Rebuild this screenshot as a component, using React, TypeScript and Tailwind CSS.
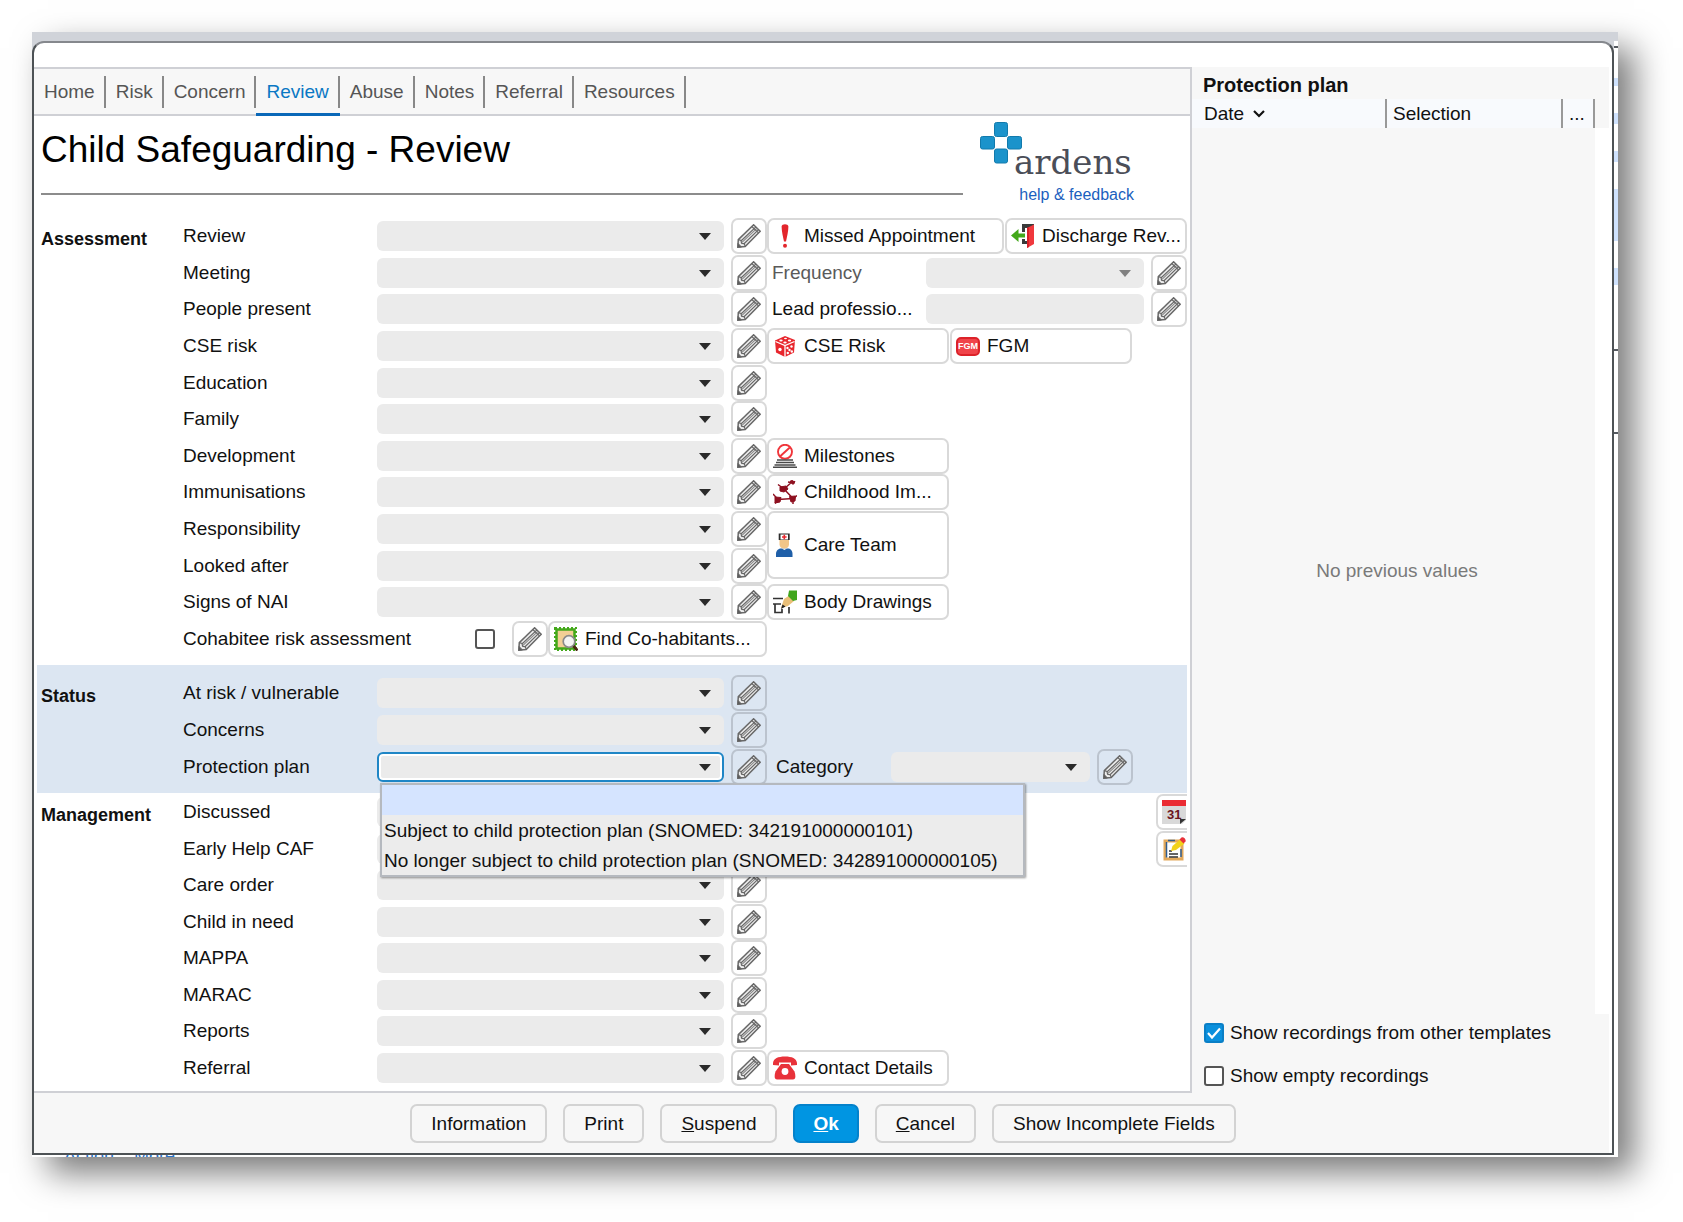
import type { ReactNode } from "react";
import clsx from "clsx";

const tabs = ["Home", "Risk", "Concern", "Review", "Abuse", "Notes", "Referral", "Resources"];

const options = [
  "",
  "Subject to child protection plan (SNOMED: 342191000000101)",
  "No longer subject to child protection plan (SNOMED: 342891000000105)",
];

// slices of the application visible behind the dialog
const backdrop = [
  { height: "h-[5px]", color: "bg-white" },
  { height: "h-[2px]", color: "bg-[#555a60]" },
  { height: "h-[30px]", color: "bg-white" },
  { height: "h-[8px]", color: "bg-[#cfe2fd]" },
  { height: "h-[27px]", color: "bg-white" },
  { height: "h-[11px]", color: "bg-[#cfe2fd]" },
  { height: "h-[27px]", color: "bg-white" },
  { height: "h-[11px]", color: "bg-[#cfe2fd]" },
  { height: "h-[27px]", color: "bg-white" },
  { height: "h-[52px]", color: "bg-[#cfe2fd]" },
  { height: "h-[27px]", color: "bg-white" },
  { height: "h-[17px]", color: "bg-[#cfe2fd]" },
  { height: "h-[64px]", color: "bg-white" },
  { height: "h-[2px]", color: "bg-[#555a60]" },
  { height: "h-[81px]", color: "bg-white" },
  { height: "h-[2px]", color: "bg-[#555a60]" },
];

function PencilIcon() {
  return (
    <svg viewBox="0 0 24 24" className="h-6 w-6" fill="none" stroke="#686868">
      <path d="M.8 23.2 1.3 15.6 16.6.8l6.6 6.4L8.2 22.6z" fill="#ececec" strokeWidth="1.5" />
      <path d="M1.3 15.6 4 16.4l.6 2.8 2.8.7.8 2.7M4.2 16.8 19 2.9M7 19.7 21.6 5.6" strokeWidth="1.2" />
      <path d="M5.2 18.2 20.2 4.2" stroke="#8a8a8a" strokeWidth="1.1" />
      <path d="M.8 23.2 1 19.4l3.4 3.5z" fill="#555" />
      <path d="m14.8 2.5 6.7 6.4" strokeWidth="1.2" />
    </svg>
  );
}

function AlertIcon() {
  return (
    <svg viewBox="0 0 24 24" className="h-6 w-6" fill="#e3262c">
      <path d="M8.6 2.6C8.8-.5 15.2-.5 15.4 2.6 15.4 7 14 13 13 17.5h-2C10 13 8.6 7 8.6 2.6z" />
      <circle cx="12" cy="21.8" r="2" />
    </svg>
  );
}

function DoorIcon() {
  return (
    <svg viewBox="0 0 24 24" className="h-6 w-6">
      <path d="M11 0h12v4H14v4h-3zM11 15h3v2h2v3h-5z" fill="#3a3a3a" />
      <path d="m16 4 7-3.5V20l-7 4z" fill="#f0383d" />
      <path d="m16 4 2-1v20l-2 1z" fill="#d81f27" />
      <path d="M0 11.5 7.5 5v4.5H14v4H7.5V18z" fill="#43a81a" />
    </svg>
  );
}

function DiceIcon() {
  return (
    <svg viewBox="0 0 24 24" className="h-6 w-6">
      <path d="m12 2 10 4-1 12.5-9 4.5-9-4.5L2 6.5z" fill="#e8262d" />
      <path d="m2.5 7.5 9.5 4 9.5-4M12 11.5V23" stroke="#fff" strokeWidth="1.3" fill="none" />
      <g fill="#fff">
        <ellipse cx="8" cy="6.5" rx="1.7" ry="1" />
        <ellipse cx="12.5" cy="4.5" rx="1.5" ry=".8" />
        <ellipse cx="12" cy="8.5" rx="1.7" ry="1" />
        <ellipse cx="16.5" cy="6.5" rx="1.7" ry="1" />
        <circle cx="7" cy="15.5" r="1.7" />
        <circle cx="14.5" cy="14" r="1.2" />
        <circle cx="18.5" cy="12.5" r="1.2" />
        <circle cx="16.5" cy="16" r="1.2" />
        <circle cx="14.8" cy="19" r="1.2" />
        <circle cx="18.8" cy="17.5" r="1.2" />
      </g>
    </svg>
  );
}

function FgmIcon() {
  return (
    <span className="grid h-[19px] w-6 place-items-center rounded-[5px] border-2 border-[#dc2229] bg-[#f0444a] text-[9px] leading-none font-bold text-white">
      FGM
    </span>
  );
}

function MilestonesIcon() {
  return (
    <svg viewBox="0 0 24 24" className="h-6 w-6" fill="none">
      <circle cx="12" cy="7.8" r="7" stroke="#f0353a" strokeWidth="1.9" />
      <path d="M7.2 12.2 16.8 3.5" stroke="#f0353a" strokeWidth="1.9" />
      <path d="M4 16h16M3 18.5h18M1.5 21h21M0 23.3h24" stroke="#4a4a4a" strokeWidth="1.4" />
    </svg>
  );
}

function VirusIcon() {
  return (
    <svg viewBox="0 0 24 24" className="h-6 w-6" fill="#8e1020" stroke="#8e1020">
      <path
        d="m11 9 9-8M11 9 5 4.5M11 9l9 9.5M20 18.5 5 19.5M0 14l5 5.5-3 4M15 2l6 1M18.5 0l3 3.5M20 18.5V24M20 18.5l4-3"
        strokeWidth="1.5"
        fill="none"
      />
      <path d="m7 7 6-1 2 3-4 3-4-1z" />
      <path d="m2 17 6 .5-1 4.5-5 1zM16.5 16.5l6-.5-.5 5-4 1z" />
      <path d="m17 1 5 .5-2 3z" />
    </svg>
  );
}

function NurseIcon() {
  return (
    <svg viewBox="0 0 24 24" className="h-6 w-6">
      <path d="M3 24v-3c0-4 3-5.500 5-5.500h6.500c3 0 5 2 5 5.500v3z" fill="#1f5fa8" />
      <path d="m9 15.5 2.300 1.500 2.700-1.500z" fill="#fff" />
      <path d="M6.500 7h9.500v4.500c0 2.500-2 4-4.700 4S6.500 14 6.500 11.500z" fill="#f1c588" />
      <path d="M5.700.5h11V7h-11z" fill="#2b2b2b" />
      <path d="M7.500 1.500h7.500V6.500H7.500z" fill="#fff" />
      <path d="M11.300 1.800v4.400M9 4h4.600" stroke="#e8262d" strokeWidth="1.6" />
    </svg>
  );
}

function DrawingIcon() {
  return (
    <svg viewBox="0 0 24 24" className="h-6 w-6" fill="none" stroke="#333">
      <path d="M0 8.5h10M0 14h8M2 14v8.5h7V19M16 17v6.5" strokeWidth="1.7" />
      <path d="m8 18 3-9 6-4 4 6-6 5z" fill="#e9bf78" stroke="none" />
      <path d="M16 .5h8V10l-4 1-5-5z" fill="#3fa51c" stroke="none" />
      <path d="m8 19 1.5-4.5 3 2z" fill="#222" stroke="none" />
    </svg>
  );
}

function StampIcon() {
  return (
    <svg viewBox="0 0 24 24" className="h-6 w-6" fill="none">
      <path d="M2.5 2.5h18v19h-18z" fill="#f2cf95" stroke="#43a81a" strokeWidth="2.5" />
      <path d="M1 1h21v22H1z" stroke="#43a81a" strokeWidth="2" strokeDasharray="2 2" />
      <circle cx="15" cy="14.5" r="5.8" fill="#f4f4f4" stroke="#8a8a8a" strokeWidth="1.7" />
      <path d="m19.5 19 4 4.5" stroke="#4a2512" strokeWidth="2.8" />
    </svg>
  );
}

function PhoneIcon() {
  return (
    <svg viewBox="0 0 24 24" className="h-6 w-6" fill="#e8323a">
      <path d="M0 7C.5 2.5 5 .5 12 .5S23.5 2.5 24 7v2l-6 .5V6.5H6v3L0 9z" />
      <path d="M8 8h8l5.5 7.5c1.5 5 1 8-1.5 8H4c-2.5 0-3-3-1.5-8z" />
      <circle cx="12" cy="15.5" r="3.4" fill="#fff" />
    </svg>
  );
}

function CalendarIcon() {
  return (
    <svg viewBox="0 0 24 24" className="h-6 w-6">
      <path d="M0 0h24v20l-4 4H0z" fill="#d9d9d9" />
      <path d="M0 0h24v6H0z" fill="#ea2c33" />
      <path d="M18 24v-5h6z" fill="#333" />
      <text x="5" y="19" fontSize="13" fontWeight="bold" fill="#6b1520" fontFamily="Liberation Sans, sans-serif">
        31
      </text>
    </svg>
  );
}

function ClipboardIcon() {
  return (
    <svg viewBox="0 0 24 24" className="h-6 w-6" fill="none">
      <path d="M3 4h17v18H3z" fill="#fff" stroke="#e3a95c" strokeWidth="3" />
      <path d="M4.5 20.5V5M19 20V12M6 3.5h7" stroke="#2f5c8f" strokeWidth="1.5" />
      <path d="M7 14h3M7 17h9M7 20h9" stroke="#333" strokeWidth="1.5" />
      <path d="m9 14 1.5-5 8-7 4 4.5L14 13z" fill="#f2d21b" />
      <path d="m17.5 2.5 2-2c2-1 5 2 4 4l-2 2z" fill="#e8323a" />
    </svg>
  );
}

function EditButton({ label }: { label: string }) {
  return (
    <button
      aria-label={`Edit ${label}`}
      className="grid h-9 w-9 shrink-0 place-items-center rounded-[7px] border-2 border-black/15"
    >
      <PencilIcon />
    </button>
  );
}

function LinkButton({
  icon,
  className,
  children,
}: {
  icon: ReactNode;
  className?: string;
  children: ReactNode;
}) {
  return (
    <button
      className={clsx(
        "flex shrink-0 items-center gap-[7px] rounded-[7px] border-2 border-black/15 bg-white pl-1 whitespace-nowrap",
        className ?? "h-9 w-[182px]",
      )}
    >
      {icon}
      {children}
    </button>
  );
}

function SelectBox({ id, disabled, focused }: { id: string; disabled?: boolean; focused?: boolean }) {
  return (
    <div className="relative flex min-w-0 flex-1">
      <select
        id={id}
        disabled={disabled}
        className={clsx(
          "h-[30px] w-full appearance-none rounded-[6px] bg-[#ebebeb] px-2 outline-none",
          focused && "border-2 border-[#1f86c6] ring-2 ring-white ring-inset",
        )}
      >
        <option />
      </select>
      <svg
        viewBox="0 0 12 7"
        className={clsx(
          "pointer-events-none absolute top-3 right-[13px] h-[7px] w-3",
          disabled ? "fill-[#808080]" : "fill-[#2a2a2a]",
        )}
      >
        <path d="M0 0h12L6 7z" />
      </svg>
      {focused && (
        <ul
          role="listbox"
          className="absolute top-full left-[3px] z-10 mt-px w-[645px] border-2 border-[#b5b9bf] bg-[#ececec] whitespace-nowrap shadow-[1px_1px_2px_rgba(0,0,0,0.4)]"
        >
          {options.map((option) => (
            <li
              key={option}
              role="option"
              aria-selected={option === ""}
              className="h-[30px] px-[2px] leading-8 aria-selected:bg-[#d5e4ff]"
            >
              {option}
            </li>
          ))}
        </ul>
      )}
    </div>
  );
}

function Row({
  label,
  text,
  focused,
  children,
}: {
  label: string;
  text?: boolean;
  focused?: boolean;
  children?: ReactNode;
}) {
  const id = label.toLowerCase().replace(/\W+/g, "-");
  return (
    <div className="flex items-center">
      <label htmlFor={id} className="w-[194px] shrink-0">
        {label}
      </label>
      {text ? (
        <input id={id} type="text" className="h-[30px] min-w-0 flex-1 rounded-[6px] bg-[#ebebeb] px-2" />
      ) : (
        <SelectBox id={id} focused={focused} />
      )}
      <div className="ml-[7px]">
        <EditButton label={label} />
      </div>
      <div className="flex h-9 w-[420px] shrink-0 items-center gap-px">{children}</div>
    </div>
  );
}

function Section({
  title,
  className,
  rows,
  children,
}: {
  title: string;
  className?: string;
  rows: string;
  children: ReactNode;
}) {
  return (
    <section className={clsx("flex", className)}>
      <h2 className="w-[146px] shrink-0 pt-[9px] pl-1 text-lg leading-6 font-bold">{title}</h2>
      <div className={clsx("grid min-w-0 flex-1", rows)}>{children}</div>
    </section>
  );
}

function Checkbox({ id, checked }: { id: string; checked?: boolean }) {
  return (
    <span className="relative flex h-5 w-5 shrink-0">
      <input
        id={id}
        type="checkbox"
        defaultChecked={checked}
        className="peer h-5 w-5 appearance-none rounded-[3px] border-2 border-[#555] bg-white checked:border-[#0a7fc6] checked:bg-[#0a90dd]"
      />
      <svg
        viewBox="0 0 20 20"
        className="pointer-events-none absolute inset-0 hidden h-5 w-5 peer-checked:block"
        fill="none"
        stroke="#fff"
        strokeWidth="2.2"
      >
        <path d="m4 10 4 4.5 8-9" />
      </svg>
    </span>
  );
}

function Logo() {
  return (
    <a href="#help" className="block w-[154px]">
      <span className="flex">
        <svg viewBox="0 0 42 42" className="h-[42px] w-[42px]" fill="#1b93cb" stroke="#127aac" strokeWidth="1">
          <rect x="14.5" y=".5" width="13" height="14" rx="2" />
          <rect x=".5" y="14.5" width="14" height="12.5" rx="2" />
          <rect x="27.5" y="14.5" width="14" height="12.5" rx="2" />
          <rect x="14.5" y="27" width="13" height="14" rx="2" />
        </svg>
        <span className="-ml-2 pt-[22px] font-['DejaVu_Serif'] text-[34px] leading-9 text-[#4b4e58]">ardens</span>
      </span>
      <span className="block pt-[5px] text-right text-base leading-5 text-[#1b5fbe]">help &amp; feedback</span>
    </a>
  );
}

function HistoryPanel() {
  return (
    <aside className="mr-[3px] flex w-[417px] shrink-0 flex-col bg-[#f7f7f7]">
      <h2 className="h-8 pl-[11px] text-xl leading-9 font-bold">Protection plan</h2>
      <div className="flex flex-1">
        <table className="flex-1 text-left">
          <thead>
            <tr className="h-[29px] bg-[#f8fafd]">
              <th className="border-r-2 border-[#999] pl-3 font-normal">
                <span className="flex items-center gap-[9px]">
                  Date
                  <svg viewBox="0 0 12 8" className="h-2 w-3" fill="none" stroke="#111" strokeWidth="2.2">
                    <path d="m1 1 5 5 5-5" />
                  </svg>
                </span>
              </th>
              <th className="w-[176px] border-r-2 border-[#999] pl-[6px] font-normal">Selection</th>
              <th className="w-8 border-r-2 border-[#999] pl-[6px] font-normal">...</th>
            </tr>
          </thead>
          <tbody>
            <tr>
              <td colSpan={3} className="pl-2 text-center text-[#7a7a7a]">
                No previous values
              </td>
            </tr>
          </tbody>
        </table>
        <div className="mt-[29px] w-[14px] bg-white" />
      </div>
      <div className="flex h-[79px] flex-col gap-[23px] pt-[9px] pl-3">
        <label htmlFor="other-templates" className="flex h-5 items-center gap-[6px]">
          <Checkbox id="other-templates" checked />
          Show recordings from other templates
        </label>
        <label htmlFor="empty-recordings" className="flex h-5 items-center gap-[6px]">
          <Checkbox id="empty-recordings" />
          Show empty recordings
        </label>
      </div>
    </aside>
  );
}

function FooterButton({ children }: { children: ReactNode }) {
  return (
    <button className="h-[39px] rounded-[7px] border-2 border-[#d3d3d3] px-[19px]">{children}</button>
  );
}

export default function App() {
  return (
    <div className="min-h-screen overflow-hidden bg-white font-['Liberation_Sans',Arial,sans-serif] text-[19px] leading-6 text-[#111]">
      <div className="mt-8 mr-[65px] ml-8 bg-[#d0d3d9] pt-[9px] shadow-[16px_16px_32px_rgba(0,0,0,0.52)]">
        <div className="flex">
          <div className="flex min-w-0 flex-1 flex-col rounded-t-[12px] border-2 border-[#4d5255] border-t-[#85888d] bg-white pt-6">
            <div className="flex">
              <main className="min-w-0 flex-1 border-t-2 border-r-2 border-b-2 border-[#cfd0d5]">
                <nav className="flex h-[47px] border-b-2 border-[#cfd0d5] bg-[#f7f7f7]">
                  {tabs.map((tab) => (
                    <a
                      key={tab}
                      href={`#${tab.toLowerCase()}`}
                      className={clsx(
                        "-mb-[2px] flex pt-[7px]",
                        tab === "Review" ? "border-b-[3px] border-[#0a68b8] text-[#0a78c4]" : "text-[#555]",
                      )}
                    >
                      <span className="h-8 border-r-2 border-[#888] pr-[9px] pl-[10px] leading-8">{tab}</span>
                    </a>
                  ))}
                </nav>

                <header className="flex h-[102px] items-start justify-between pr-[56px] pl-[7px]">
                  <h1 className="mr-[17px] h-[79px] flex-1 border-b-2 border-[#8c8c8c] pt-[13px] text-[37px] leading-[42px] text-black">
                    Child Safeguarding - Review
                  </h1>
                  <div className="pt-[6px]">
                    <Logo />
                  </div>
                </header>

                <div className="px-[3px] pb-[5px]">
                  <Section title="Assessment" rows="h-[439px] grid-rows-12" className="mb-2">
                    <Row label="Review">
                      <LinkButton icon={<AlertIcon />} className="h-9 w-[237px]">
                        Missed Appointment
                      </LinkButton>
                      <LinkButton icon={<DoorIcon />}>Discharge Rev...</LinkButton>
                    </Row>
                    <Row label="Meeting">
                      <label htmlFor="frequency" className="w-[158px] pl-[5px] text-[#5a5a5a]">
                        Frequency
                      </label>
                      <SelectBox id="frequency" disabled />
                      <div className="ml-[6px]">
                        <EditButton label="Frequency" />
                      </div>
                    </Row>
                    <Row label="People present" text>
                      <label htmlFor="lead" className="w-[158px] pl-[5px]">
                        Lead professio...
                      </label>
                      <input id="lead" type="text" className="h-[30px] min-w-0 flex-1 rounded-[6px] bg-[#ebebeb] px-2" />
                      <div className="ml-[6px]">
                        <EditButton label="Lead professional" />
                      </div>
                    </Row>
                    <Row label="CSE risk">
                      <LinkButton icon={<DiceIcon />}>CSE Risk</LinkButton>
                      <LinkButton icon={<FgmIcon />}>FGM</LinkButton>
                    </Row>
                    <Row label="Education" />
                    <Row label="Family" />
                    <Row label="Development">
                      <LinkButton icon={<MilestonesIcon />}>Milestones</LinkButton>
                    </Row>
                    <Row label="Immunisations">
                      <LinkButton icon={<VirusIcon />}>Childhood Im...</LinkButton>
                    </Row>
                    <Row label="Responsibility">
                      <LinkButton icon={<NurseIcon />} className="h-[68px] w-[182px] self-start">
                        Care Team
                      </LinkButton>
                    </Row>
                    <Row label="Looked after" />
                    <Row label="Signs of NAI">
                      <LinkButton icon={<DrawingIcon />}>Body Drawings</LinkButton>
                    </Row>
                    <div className="flex items-center">
                      <label htmlFor="cohabitee" className="w-[292px]">
                        Cohabitee risk assessment
                      </label>
                      <Checkbox id="cohabitee" />
                      <div className="ml-[17px]">
                        <EditButton label="Cohabitee risk assessment" />
                      </div>
                      <LinkButton icon={<StampIcon />} className="h-9 w-[219px]">
                        Find Co-habitants...
                      </LinkButton>
                    </div>
                  </Section>

                  <Section title="Status" rows="h-[110px] grid-rows-3" className="bg-[#dce6f2] pt-[10px] pb-2">
                    <Row label="At risk / vulnerable" />
                    <Row label="Concerns" />
                    <Row label="Protection plan" focused>
                      <label htmlFor="category" className="w-[123px] pl-[9px]">
                        Category
                      </label>
                      <SelectBox id="category" />
                      <div className="mr-[54px] ml-[6px]">
                        <EditButton label="Category" />
                      </div>
                    </Row>
                  </Section>

                  <Section title="Management" rows="h-[292px] grid-rows-8" className="pt-px">
                    <Row label="Discussed">
                      <button
                        aria-label="Pick date"
                        className="ml-auto h-9 w-[31px] rounded-l-[7px] border-2 border-r-0 border-black/15 pl-1"
                      >
                        <CalendarIcon />
                      </button>
                    </Row>
                    <Row label="Early Help CAF">
                      <button
                        aria-label="Add note"
                        className="ml-auto h-9 w-[31px] rounded-l-[7px] border-2 border-r-0 border-black/15 pl-1"
                      >
                        <ClipboardIcon />
                      </button>
                    </Row>
                    <Row label="Care order" />
                    <Row label="Child in need" />
                    <Row label="MAPPA" />
                    <Row label="MARAC" />
                    <Row label="Reports" />
                    <Row label="Referral">
                      <LinkButton icon={<PhoneIcon />}>Contact Details</LinkButton>
                    </Row>
                  </Section>
                </div>
              </main>
              <HistoryPanel />
            </div>

            <footer className="mr-[3px] flex justify-center gap-4 bg-[#f7f7f7] pt-[11px] pb-[10px] pl-[3px]">
              <FooterButton>Information</FooterButton>
              <FooterButton>Print</FooterButton>
              <FooterButton>
                <u>S</u>uspend
              </FooterButton>
              <button className="h-[39px] rounded-[7px] border-2 border-[#0482cb] bg-[#0095e2] px-[18px] font-bold text-white">
                <u>O</u>k
              </button>
              <FooterButton>
                <u>C</u>ancel
              </FooterButton>
              <FooterButton>Show Incomplete Fields</FooterButton>
            </footer>
          </div>
          <div className="w-1 bg-white">
            {backdrop.map((slice, i) => (
              <div key={i} className={clsx(slice.height, slice.color)} />
            ))}
          </div>
        </div>
        <div className="flex h-[2px] items-center gap-5 overflow-hidden bg-white pl-8 text-lg text-[#2a72c8]">
          <span>Action</span>
          <span>More</span>
        </div>
      </div>
    </div>
  );
}
